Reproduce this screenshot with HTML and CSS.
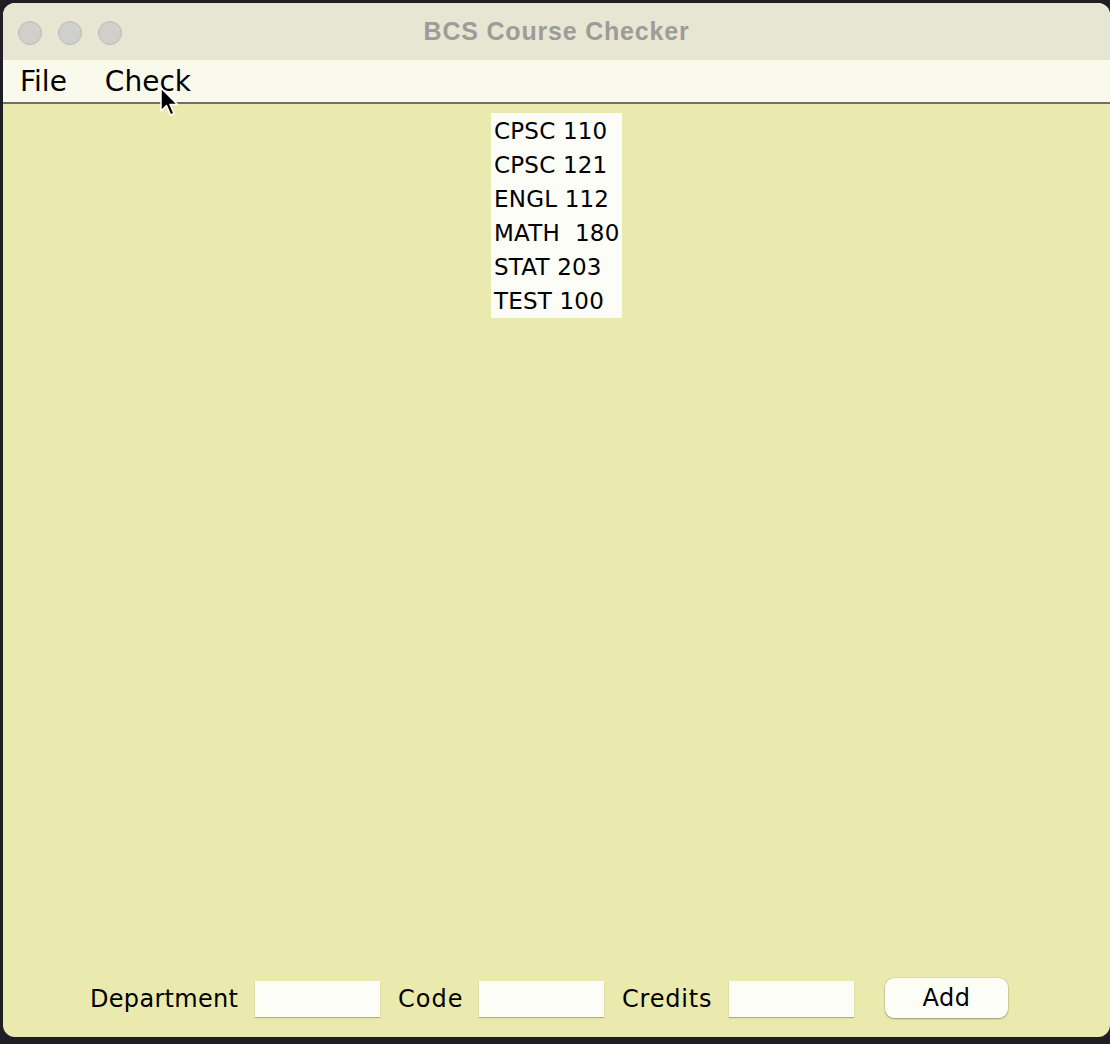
FILE: index.html
```html
<!DOCTYPE html>
<html>
<head>
<meta charset="utf-8">
<link rel="stylesheet" href="styles.css">
</head>
<body>
<div class="window">
  <div class="titlebar">
    <div class="lights">
      <span class="light"></span><span class="light"></span><span class="light"></span>
    </div>
    <div class="title">BCS Course Checker</div>
  </div>
  <div class="menubar">
    <span class="menu">File</span>
    <span class="menu menu-check">Check</span>
  </div>
  <div class="main">
    <div class="list">
      <div class="item">CPSC 110</div>
      <div class="item">CPSC 121</div>
      <div class="item">ENGL 112</div>
      <div class="item">MATH&nbsp; 180</div>
      <div class="item">STAT 203</div>
      <div class="item">TEST 100</div>
    </div>
    <div class="form">
      <span class="label label-dept">Department</span>
      <input class="field" type="text">
      <span class="label label-code">Code</span>
      <input class="field" type="text">
      <span class="label label-credits">Credits</span>
      <input class="field field-last" type="text">
      <button class="add">Add</button>
    </div>
  </div>
  <svg class="cursor" width="22" height="32" viewBox="0 0 22 32">
    <path d="M1 1 L1 24 L6.5 18.5 L10.5 28 L14 26.5 L10 17.5 L17.5 17.5 Z" fill="#000" stroke="#fff" stroke-width="1.5" stroke-linejoin="round"/>
  </svg>
</div>
</body>
</html>
```
FILE: styles.css
```css
html, body {
  margin: 0;
  padding: 0;
  background: #1e1e24;
  width: 1110px;
  height: 1044px;
  overflow: hidden;
}
.window {
  position: relative;
  margin: 3px 0 0 3px;
  width: 1107px;
  height: 1034px;
  border-radius: 12px;
  overflow: hidden;
  display: flex;
  flex-direction: column;
  background: #ebeaae;
  font-family: "DejaVu Sans", sans-serif;
  color: #000;
}
.titlebar {
  height: 57px;
  background: #e7e6d3;
  position: relative;
  display: flex;
  align-items: center;
  justify-content: center;
}
.lights {
  position: absolute;
  left: 15px;
  top: 18px;
  display: flex;
  gap: 16px;
}
.light {
  width: 22px;
  height: 22px;
  border-radius: 50%;
  background: #cfcfcc;
  border: 1px solid #bcbcb8;
}
.title {
  font-family: "Liberation Sans", Arial, sans-serif;
  font-weight: bold;
  font-size: 25px;
  letter-spacing: 0.8px;
  color: #9c9c98;
}
.menubar {
  background: #fafaec;
  border-bottom: 2px solid #6e6e6a;
  display: flex;
  align-items: center;
  box-sizing: border-box;
  height: 44px;
  padding-left: 17px;
}
.menu {
  font-size: 28px;
  margin-right: 38px;
  line-height: 1;
  padding-top: 2px;
}
.main {
  flex: 1;
  display: flex;
  flex-direction: column;
  align-items: center;
}
.list {
  margin-top: 9px;
  background: #fdfdf8;
  width: 131px;
  padding-left: 3px;
  padding-top: 1px;
  height: 205px;
  box-sizing: border-box;
}
.item {
  font-size: 23px;
  line-height: 34px;
  height: 34px;
  white-space: nowrap;
  letter-spacing: 0.2px;
}
.form {
  margin-top: auto;
  margin-bottom: 19px;
  align-self: flex-start;
  padding-left: 87px;
  display: flex;
  align-items: center;
}
.label {
  font-size: 24px;
  line-height: 1;
  margin-right: 17px;
}
.label-dept { width: 148px; letter-spacing: 0.3px; }
.label-code { width: 64px; letter-spacing: 1px; }
.label-credits { width: 90px; letter-spacing: 0.8px; }
.field {
  width: 125px;
  height: 36px;
  box-sizing: border-box;
  border: none;
  background: #fdfdf8;
  box-shadow: 0 1px 1px rgba(0,0,0,0.25);
  margin: 0 18px 0 0;
  padding: 0;
}
.field-last {
  margin-right: 31px;
}
.add {
  width: 123px;
  height: 40px;
  border: none;
  border-radius: 9px;
  background: #fdfdf8;
  box-shadow: 0 1px 2px rgba(0,0,0,0.3), 0 0 0 0.5px rgba(0,0,0,0.12);
  font-family: "DejaVu Sans", sans-serif;
  font-size: 24px;
  letter-spacing: 0.5px;
  color: #000;
  padding: 0;
  margin-top: -2px;
}
.cursor {
  position: absolute;
  left: 157px;
  top: 84px;
}
```
